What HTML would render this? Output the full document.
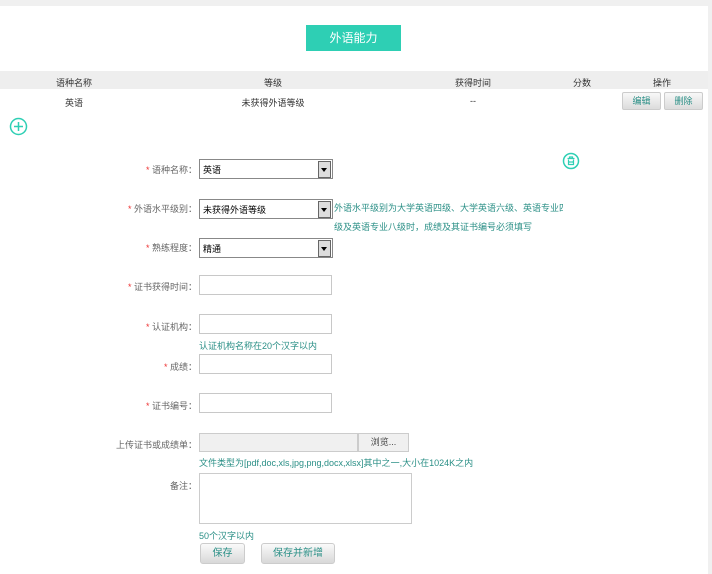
<!DOCTYPE html><html><head><meta charset="utf-8"><style>
body{margin:0;width:712px;height:574px;background:#f0f0f0;font-family:"Liberation Sans","Noto Sans CJK SC",sans-serif;font-size:9px;color:#333;position:relative;overflow:hidden}
.p{position:absolute;left:0;top:6px;width:708px;height:568px;background:#fff}
.a{position:absolute}
.t{left:306px;top:25px;width:95px;height:26px;background:#2ecfb4;color:#fff;font-size:12px;text-align:center;line-height:26px}
.hd{left:0;top:71px;width:708px;height:18px;background:#eeeeee}
.c{position:absolute;transform:translateX(-50%);white-space:nowrap}
.btn{position:absolute;height:16px;background:linear-gradient(#f8f8f8,#dcdcdc);border:1px solid #ccc;border-radius:2px;color:#2a8f86;text-align:center;line-height:16px;font-size:9px}
.l{position:absolute;right:515px;white-space:nowrap;color:#666;text-align:right}
.l b{color:#e33;font-weight:normal}
.in{position:absolute;left:199px;width:131px;height:18px;border:1px solid #c8c8c8;background:#fff}
.sel{position:absolute;left:199px;width:134px;height:20px;border:1px solid #888;background:#fff;line-height:20px;padding-left:3px;box-sizing:border-box;color:#000}
.sel i{position:absolute;right:1px;top:1px;width:11px;height:15px;border:1px solid #666;background:#ddd}
.sel i:after{content:"";position:absolute;left:2px;top:6px;border:3.5px solid transparent;border-top:4px solid #000}
.h{position:absolute;color:#2a8f86;white-space:nowrap;overflow:hidden}
.sb{position:absolute;height:19px;background:linear-gradient(#fafafa,#d8d8d8);border:1px solid #ccc;border-radius:3px;color:#2a8f86;text-align:center;line-height:19px;font-size:10px}
</style></head><body>
<div class="p"></div>
<div class="a t">外语能力</div>
<div class="a hd"></div>
<div class="c" style="left:74px;top:76px">语种名称</div>
<div class="c" style="left:273px;top:76px">等级</div>
<div class="c" style="left:473px;top:76px">获得时间</div>
<div class="c" style="left:582px;top:76px">分数</div>
<div class="c" style="left:662px;top:76px">操作</div>
<div class="c" style="left:74px;top:96px">英语</div>
<div class="c" style="left:273px;top:96px">未获得外语等级</div>
<div class="c" style="left:473px;top:96px">--</div>
<div class="btn" style="left:622px;top:92px;width:37px">编辑</div>
<div class="btn" style="left:664px;top:92px;width:37px">删除</div>
<svg class="a" style="left:9px;top:117px" width="19" height="19"><circle cx="9.5" cy="9.5" r="8" fill="none" stroke="#2ecfb4" stroke-width="1.5"/><path d="M9.5 5v9M5 9.5h9" stroke="#2ecfb4" stroke-width="1.5"/></svg>
<svg class="a" style="left:562px;top:152px" width="18" height="18"><circle cx="9" cy="9" r="7.5" fill="none" stroke="#2ecfb4" stroke-width="1.5"/><path d="M5.5 6.5h7M7.5 6.5V5h3v1.5M6.5 7.5v5h5v-5M8 9v2M10 9v2" fill="none" stroke="#2ecfb4" stroke-width="1.2"/></svg>
<div class="l" style="top:163px"><b>*</b> 语种名称：</div>
<div class="sel" style="top:159px">英语<i></i></div>
<div class="l" style="top:202px"><b>*</b> 外语水平级别：</div>
<div class="sel" style="top:199px">未获得外语等级<i></i></div>
<div class="h" style="left:334px;top:201px;width:229px">外语水平级别为大学英语四级、大学英语六级、英语专业四</div>
<div class="h" style="left:334px;top:220px">级及英语专业八级时，成绩及其证书编号必须填写</div>
<div class="l" style="top:241px"><b>*</b> 熟练程度：</div>
<div class="sel" style="top:238px">精通<i></i></div>
<div class="l" style="top:280px"><b>*</b> 证书获得时间：</div>
<div class="in" style="top:275px"></div>
<div class="l" style="top:320px"><b>*</b> 认证机构：</div>
<div class="in" style="top:314px"></div>
<div class="h" style="left:199px;top:339px">认证机构名称在20个汉字以内</div>
<div class="l" style="top:360px"><b>*</b> 成绩：</div>
<div class="in" style="top:354px"></div>
<div class="l" style="top:399px"><b>*</b> 证书编号：</div>
<div class="in" style="top:393px"></div>
<div class="l" style="top:438px">上传证书或成绩单：</div>
<div class="a" style="left:199px;top:433px;width:157px;height:17px;border:1px solid #ccc;background:#f0f0f0"></div>
<div class="a" style="left:358px;top:433px;width:49px;height:17px;border:1px solid #ccc;background:#f0f0f0;text-align:center;line-height:17px;color:#444">浏览...</div>
<div class="h" style="left:199px;top:456px">文件类型为[pdf,doc,xls,jpg,png,docx,xlsx]其中之一,大小在1024K之内</div>
<div class="l" style="top:479px">备注：</div>
<div class="a" style="left:199px;top:473px;width:211px;height:49px;border:1px solid #ccc"></div>
<div class="h" style="left:199px;top:529px">50个汉字以内</div>
<div class="sb" style="left:200px;top:543px;width:43px">保存</div>
<div class="sb" style="left:261px;top:543px;width:72px">保存并新增</div>
</body></html>
